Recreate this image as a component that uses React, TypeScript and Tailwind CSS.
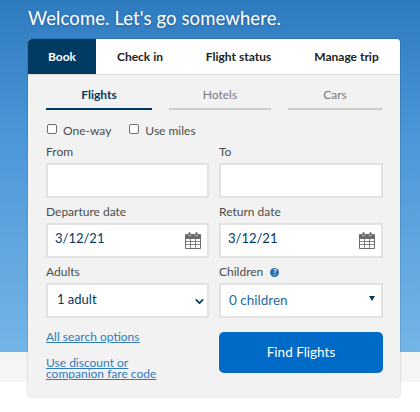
import { ChevronDown } from "lucide-react";

const font = { fontFamily: "Lato, 'Noto Sans', sans-serif" };

function CalendarIcon() {
  return (
    <svg width="16" height="17" viewBox="0 0 16 17" className="text-[#6a6a6a]" aria-hidden="true">
      <path d="M0.5 3.5h15v13h-15z" fill="#fff" stroke="currentColor" />
      <path d="M0.5 2.5h15v4h-15z" fill="currentColor" stroke="currentColor" />
      <path d="M5.5 7v9M10.5 7v9M1 9.5h14M1 12.5h14" stroke="currentColor" strokeWidth="0.8" fill="none" />
      <rect x="3" y="0" width="3" height="4" rx="1.5" fill="currentColor" stroke="#f2f2f2" strokeWidth="0.5" />
      <rect x="10" y="0" width="3" height="4" rx="1.5" fill="currentColor" stroke="#f2f2f2" strokeWidth="0.5" />
    </svg>
  );
}

function Field({ label, children }: { label: React.ReactNode; children?: React.ReactNode }) {
  return (
    <div>
      <div className="flex h-[20px] items-center gap-[7px] pb-[2px] text-[12px] text-[#4c4c4c]">{label}</div>
      <div className="flex h-[35px] items-center justify-between border-2 border-[#e2e2e2] bg-white">{children}</div>
    </div>
  );
}

function Check({ label }: { label: string }) {
  return (
    <label className="flex items-center gap-[6px] text-[12px] text-[#4c4c4c]">
      <span className="mb-[4px] h-[10px] w-[10px] rounded-[2px] border border-[#6f6f6f] bg-white" />
      {label}
    </label>
  );
}

export default function App() {
  return (
    <div
      className="h-[412px] w-[420px] overflow-hidden bg-[linear-gradient(180deg,#2f7bc0_0px,#4a95d6_130px,#74b5e8_352px,#f5f5f5_352px,#f5f5f5_382px,#ffffff_382px)]"
      style={font}
    >
      <h1 className="flex h-[39px] items-center pb-[1px] pl-[28px] text-[18.5px] font-normal tracking-[0.1px] text-white [text-shadow:0_1px_3px_rgba(0,0,0,0.25)]">
        Welcome. Let's go somewhere.
      </h1>

      <div className="ml-[28px] h-[358px] w-[372px] overflow-hidden rounded-[4px] bg-[#f2f2f2] shadow-[0_0_2px_rgba(0,0,0,0.3)]">
        <div className="flex h-[36px] border-b border-[#dcdcdc] bg-white text-[12px] font-bold text-[#222]">
          <div className="flex w-[68px] items-center justify-center bg-[#013a63] text-white">Book</div>
          <div className="flex w-[88px] items-center justify-center">Check in</div>
          <div className="flex w-[109px] items-center justify-center">Flight status</div>
          <div className="flex w-[107px] items-center justify-center">Manage trip</div>
        </div>

        <div className="pl-[18px] pr-[17px]">
          <div className="flex h-[35px] text-[12px]">
            <div className="flex w-[106px] items-center justify-center border-b-2 border-[#013a63] pt-[6px] font-bold text-[#013a63]">Flights</div>
            <div className="ml-[17px] flex w-[102px] items-center justify-center border-b-2 border-[#cfcfcf] pt-[6px] text-[#7a7a7a]">Hotels</div>
            <div className="ml-[17px] flex w-[94px] items-center justify-center border-b-2 border-[#cfcfcf] pt-[6px] text-[#7a7a7a]">Cars</div>
          </div>

          <div className="mt-[11px] flex h-[20px] items-center gap-[18px] pl-[1px]">
            <Check label="One-way" />
            <Check label="Use miles" />
          </div>

          <div className="mt-[2px] grid grid-cols-[163px_164px] gap-x-[10px] gap-y-[5px]">
            <Field label="From" />
            <Field label="To" />
            <Field label="Departure date">
              <span className="pb-[3px] pl-[7px] text-[13px] text-[#013a63]">3/12/21</span>
              <span className="pr-[6px]"><CalendarIcon /></span>
            </Field>
            <Field label="Return date">
              <span className="pb-[3px] pl-[7px] text-[13px] text-[#013a63]">3/12/21</span>
              <span className="pr-[6px]"><CalendarIcon /></span>
            </Field>
            <Field label="Adults">
              <span className="pb-[2px] pl-[9px] text-[13px] text-[#013a63]">1 adult</span>
              <ChevronDown size={13} strokeWidth={3} className="mr-[1px] mt-[2px] text-[#013a63]" />
            </Field>
            <Field
              label={
                <>
                  Children
                  <span className="flex h-[9px] w-[9px] items-center justify-center rounded-full bg-[#2d6fb0] text-[7px] font-bold leading-none text-white">?</span>
                </>
              }
            >
              <span className="pl-[8px] text-[13.5px] text-[#1f6aa8]">0 children</span>
              <span className="mb-[4px] mr-[6px] h-0 w-0 border-x-[3px] border-t-[5px] border-x-transparent border-t-[#013a63]" />
            </Field>
          </div>

          <div className="mt-[14px] grid grid-cols-[163px_164px] gap-x-[10px]">
            <div className="-mt-[2px] text-[12px] text-[#2f7bbd] underline">
              <a className="block leading-[14px]">All search options</a>
              <a className="mt-[13px] block w-[120px] leading-[11px]">Use discount or companion fare code</a>
            </div>
            <button className="h-[41px] rounded-[5px] bg-[#006bc6] text-[13.5px] text-white">Find Flights</button>
          </div>
        </div>
      </div>
    </div>
  );
}
